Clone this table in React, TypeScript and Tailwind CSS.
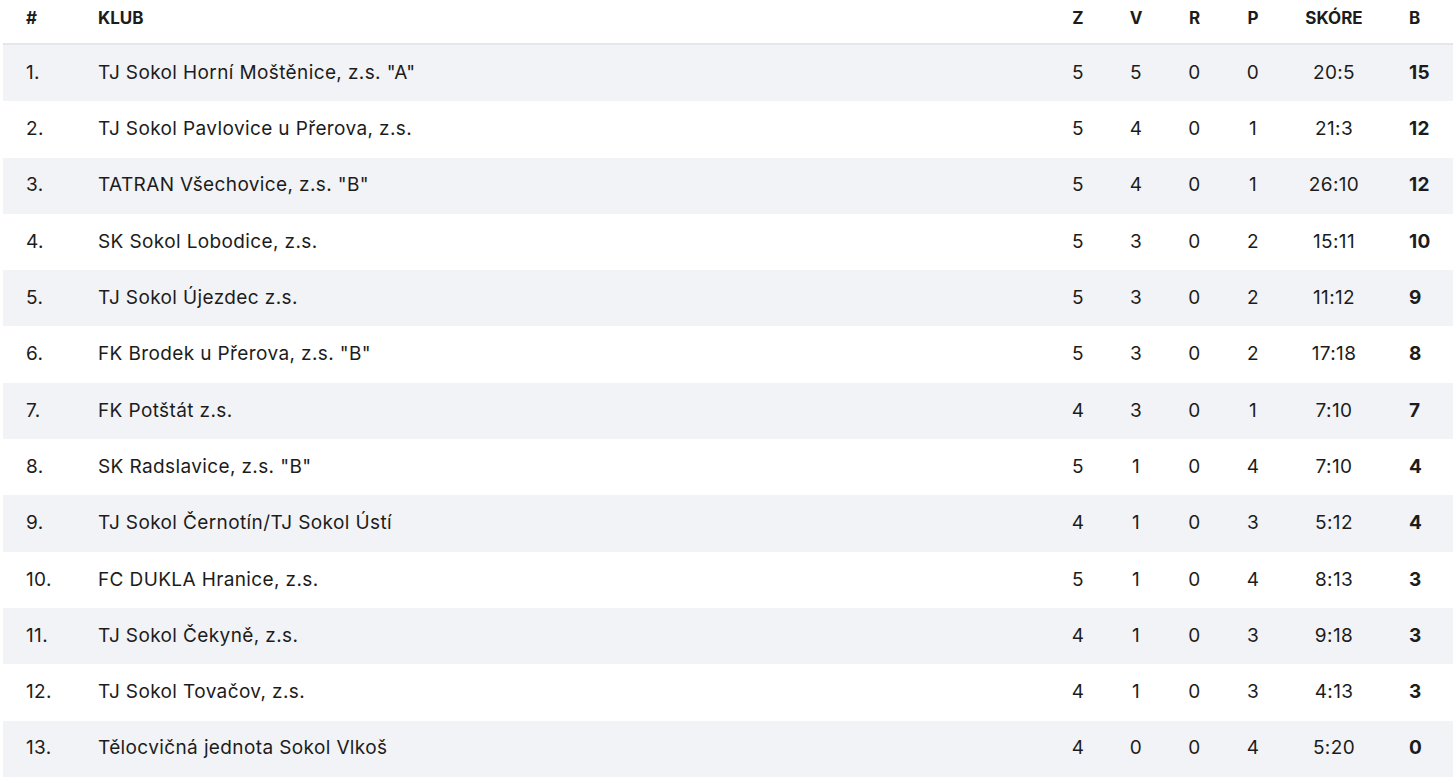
import * as React from "react";

interface Team {
  name: string;
  z: number;
  v: number;
  r: number;
  p: number;
  score: string;
  b: number;
}

const teams: Team[] = [
  { name: 'TJ Sokol Horní Moštěnice, z.s. "A"', z: 5, v: 5, r: 0, p: 0, score: "20:5", b: 15 },
  { name: "TJ Sokol Pavlovice u Přerova, z.s.", z: 5, v: 4, r: 0, p: 1, score: "21:3", b: 12 },
  { name: 'TATRAN Všechovice, z.s. "B"', z: 5, v: 4, r: 0, p: 1, score: "26:10", b: 12 },
  { name: "SK Sokol Lobodice, z.s.", z: 5, v: 3, r: 0, p: 2, score: "15:11", b: 10 },
  { name: "TJ Sokol Újezdec z.s.", z: 5, v: 3, r: 0, p: 2, score: "11:12", b: 9 },
  { name: 'FK Brodek u Přerova, z.s. "B"', z: 5, v: 3, r: 0, p: 2, score: "17:18", b: 8 },
  { name: "FK Potštát z.s.", z: 4, v: 3, r: 0, p: 1, score: "7:10", b: 7 },
  { name: 'SK Radslavice, z.s. "B"', z: 5, v: 1, r: 0, p: 4, score: "7:10", b: 4 },
  { name: "TJ Sokol Černotín/TJ Sokol Ústí", z: 4, v: 1, r: 0, p: 3, score: "5:12", b: 4 },
  { name: "FC DUKLA Hranice, z.s.", z: 5, v: 1, r: 0, p: 4, score: "8:13", b: 3 },
  { name: "TJ Sokol Čekyně, z.s.", z: 4, v: 1, r: 0, p: 3, score: "9:18", b: 3 },
  { name: "TJ Sokol Tovačov, z.s.", z: 4, v: 1, r: 0, p: 3, score: "4:13", b: 3 },
  { name: "Tělocvičná jednota Sokol Vlkoš", z: 4, v: 0, r: 0, p: 4, score: "5:20", b: 0 },
];

const cols = "grid grid-cols-[72px_1fr_58px_58px_59px_58px_104px_67px] items-center";

const App: React.FC = () => {
  return (
    <div
      className="w-full min-h-screen bg-white pl-[3px] text-[#1c1c1c]"
      style={{ fontFamily: "Inter, 'Open Sans', sans-serif" }}
    >
      {/* header */}
      <div className={`${cols} h-[45px] pb-[5px] pl-[23px] border-b-2 border-[#e4e6ea] text-[17px] font-bold`}>
        <div>#</div>
        <div>KLUB</div>
        <div className="text-center">Z</div>
        <div className="text-center">V</div>
        <div className="text-center">R</div>
        <div className="text-center">P</div>
        <div className="text-center">SKÓRE</div>
        <div className="pl-[23px]">B</div>
      </div>

      {teams.map((t, i) => (
        <div
          key={i}
          className={`${cols} h-[56.3px] pl-[23px] text-[19px] tracking-[0.02em] ${i % 2 === 0 ? "bg-[#f2f3f6]" : "bg-white"}`}
        >
          <div>{i + 1}.</div>
          <div>{t.name}</div>
          <div className="text-center">{t.z}</div>
          <div className="text-center">{t.v}</div>
          <div className="text-center">{t.r}</div>
          <div className="text-center">{t.p}</div>
          <div className="text-center">{t.score}</div>
          <div className="pl-[23px] font-bold">{t.b}</div>
        </div>
      ))}
    </div>
  );
};

export default App;
